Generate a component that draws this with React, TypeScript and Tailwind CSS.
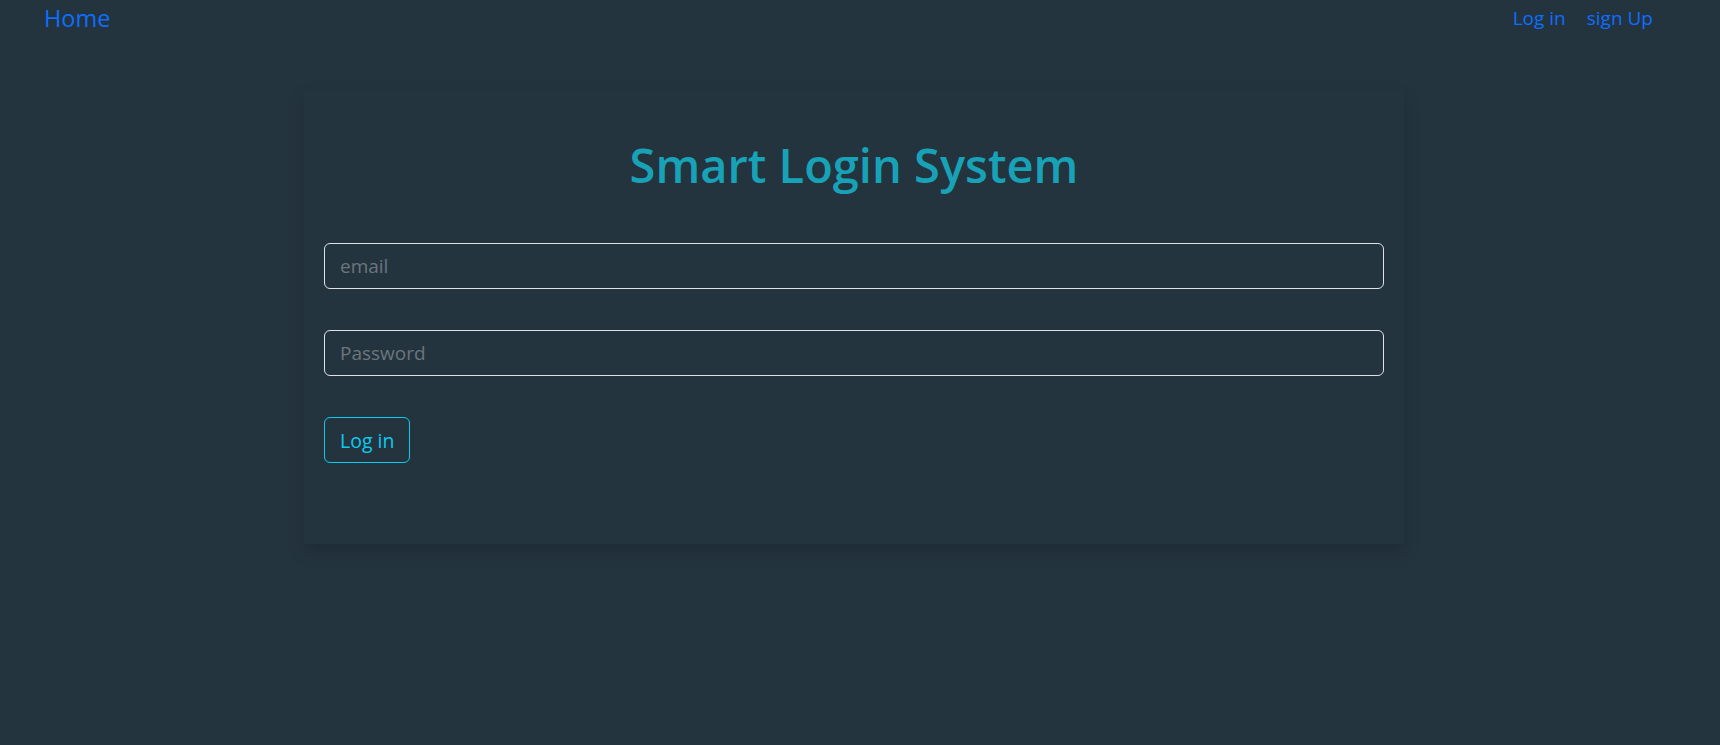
export default function App() {
  return (
    <div
      className="min-h-[745px] w-full bg-[#24343f]"
      style={{ fontFamily: '"Open Sans", "Noto Sans", sans-serif' }}
    >
      <nav className="flex h-[36px] items-center justify-between pl-[44px] pr-[67px]">
        <a className="text-[23.5px] leading-[36px] text-[#0d6efd]">Home</a>
        <div className="flex gap-[21px] text-[19px] text-[#0d6efd]">
          <a>Log in</a>
          <a>sign Up</a>
        </div>
      </nav>
      <div className="ml-[304px] mt-[54px] w-[1100px] bg-[#24343f] px-[20px] pb-[81px] pt-[47px] shadow-[0_0.5rem_1rem_rgba(0,0,0,0.18)]">
        <h1 className="text-center text-[47px] font-semibold leading-[1.2] text-[#17a2b8]">
          Smart Login System
        </h1>
        <div className="mt-[50px] flex flex-col">
          <input
            type="email"
            placeholder="email"
            className="h-[46px] w-full rounded-[6px] border border-[#dee2e6] bg-transparent px-[15px] text-[19px] text-white outline-none placeholder:text-[#6c757d]"
          />
          <input
            type="password"
            placeholder="Password"
            className="mt-[41px] h-[46px] w-full rounded-[6px] border border-[#dee2e6] bg-transparent px-[15px] text-[19px] text-white outline-none placeholder:text-[#6c757d]"
          />
          <div className="mt-[41px]">
            <button className="h-[46px] rounded-[6px] border border-[#0dcaf0] px-[15px] text-[19.5px] text-[#0dcaf0]">
              Log in
            </button>
          </div>
        </div>
      </div>
    </div>
  );
}
